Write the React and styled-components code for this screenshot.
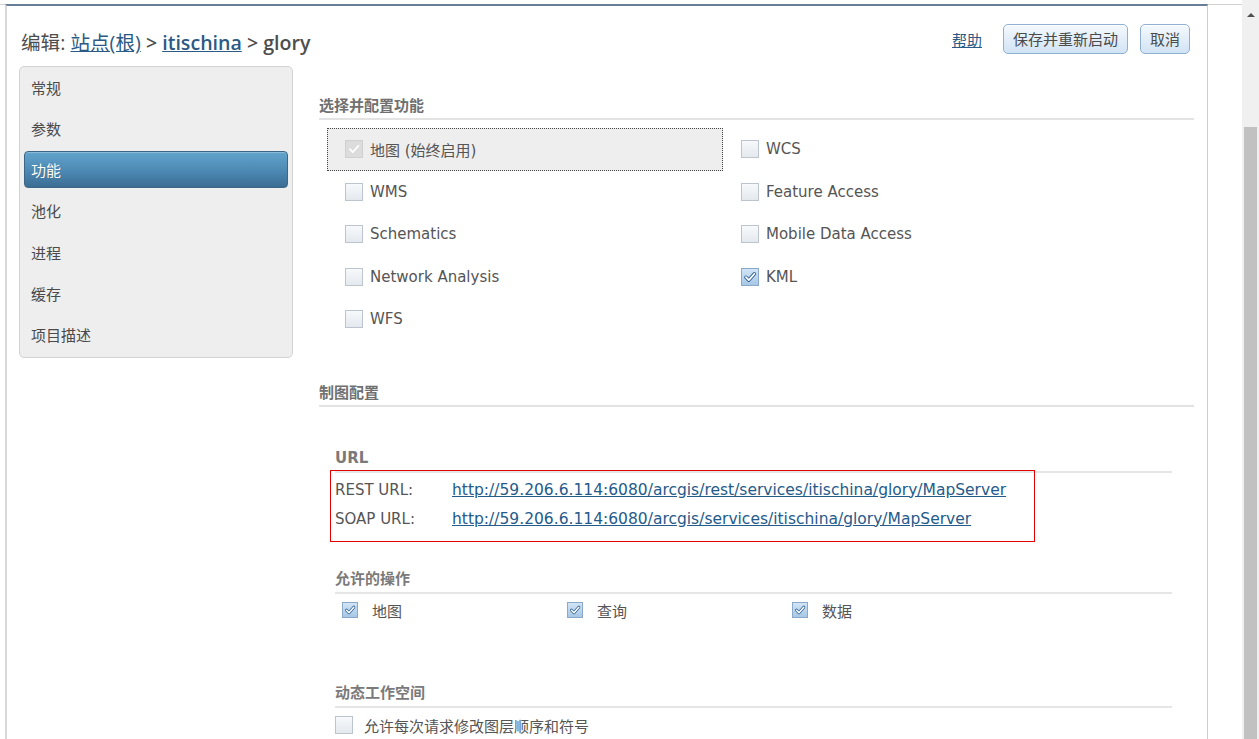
import React from "react";
import styled, { createGlobalStyle, css } from "styled-components";

const Global = createGlobalStyle`
  html, body { margin: 0; padding: 0; background: #fff; overflow: hidden; }
  body { font-family: "DejaVu Sans", "Noto Sans CJK SC", sans-serif; color: #555; }
  * { box-sizing: border-box; }
`;

const Root = styled.div`
  display: flex;
  height: 739px;
  width: 1259px;
`;

const Viewport = styled.div`
  flex: 1;
  display: flex;
  flex-direction: column;
  padding-top: 4px;
  min-width: 0;
`;

const Strip = styled.div`
  flex: 1;
  border-top: 1px solid #d2d2d2;
  display: flex;
  min-height: 0;
`;

const Frame = styled.div`
  width: 1203px;
  margin-left: 5px;
  margin-top: -1px;
  border-top: 2px solid #687d98;
  border-left: 2px solid #d8d8d8;
  border-right: 1px solid #cdcdcd;
  overflow: hidden;
  display: flex;
  flex-direction: column;
`;

const Header = styled.div`
  height: 60px;
  flex: none;
  display: flex;
  justify-content: space-between;
  align-items: flex-start;
  padding: 18px 17px 0 12px;
`;

const Title = styled.h1`
  margin: 7px 0 0 2px;
  font-family: "Open Sans", "Noto Sans CJK SC", sans-serif;
  font-size: 19.6px;
  line-height: 24px;
  font-weight: 400;
  color: #4d4d4d;
  white-space: nowrap;
`;

const Crumb = styled.a`
  color: ${(p) => (p.$link ? "#2b5a84" : "#4d4d4d")};
  text-decoration: ${(p) => (p.$link ? "underline" : "none")};
  font-weight: ${(p) => (p.$strong ? 600 : 400)};
`;

const Actions = styled.div`
  display: flex;
  align-items: center;
  height: 30px;
`;

const HelpLink = styled.a`
  font-family: "Noto Sans CJK SC", sans-serif;
  font-size: 15px;
  color: #2b5a84;
  text-decoration: underline;
  margin-right: 21px;
`;

const Button = styled.button`
  height: 30px;
  padding: 0 9px;
  margin-left: ${(p) => p.$ml || 0}px;
  border: 1px solid #8fb0d1;
  border-radius: 5px;
  background: linear-gradient(#f4f9fe, #d2e3f4);
  box-shadow: inset 0 1px 0 #fff;
  font-family: "Noto Sans CJK SC", sans-serif;
  font-size: 15px;
  color: #4a4a4a;
  line-height: 28px;
`;

const Body = styled.div`
  flex: 1;
  display: flex;
  align-items: flex-start;
  padding-left: 12px;
  min-height: 0;
`;

const Sidebar = styled.nav`
  width: 274px;
  flex: none;
  border: 1px solid #d3d3d3;
  border-radius: 5px;
  background: #eeeeee;
  padding: 1.5px 4px 3.5px;
  display: flex;
  flex-direction: column;
  gap: 4.33px;
`;

const NavItem = styled.div`
  height: 37px;
  display: flex;
  align-items: center;
  padding-left: 6px;
  font-family: "Noto Sans CJK SC", sans-serif;
  font-size: 15px;
  color: #4a4a4a;
  border: 1px solid transparent;
  border-radius: 4px;
  ${(p) =>
    p.$active &&
    css`
      color: #fff;
      border-color: #3d6687;
      background: linear-gradient(#62a4cc, #4c88b3 55%, #3b6d93);
      box-shadow: inset 0 1px 0 rgba(255, 255, 255, 0.25);
      text-shadow: 0 0 1px rgba(0, 0, 0, 0.3);
    `}
`;

const Main = styled.main`
  flex: 1;
  margin: 0 13px 0 26px;
  padding-top: 30px;
  min-width: 0;
`;

const SectionTitle = styled.div`
  font-family: "Noto Sans CJK SC", sans-serif;
  font-size: 15px;
  font-weight: 700;
  line-height: 18px;
  color: #707070;
  padding-bottom: 4px;
  border-bottom: 2px solid #e3e3e3;
  margin-top: ${(p) => p.$mt || 0}px;
`;

const FeatureGrid = styled.div`
  display: grid;
  grid-template-columns: 396px 1fr;
  grid-auto-rows: 42.5px;
  margin: 8px 0 0 8px;
`;

const FeatureCell = styled.label`
  display: flex;
  align-items: center;
  gap: 7px;
  padding-left: 17px;
  border: 1px solid transparent;
  font-size: 15px;
  color: #555;
  ${(p) =>
    p.$focus &&
    css`
      background: #eeeeee;
      border: 1px dotted #444;
    `}
`;

const Sub = styled.section`
  margin: ${(p) => p.$mt || 0}px 22px 0 16px;
`;

const SubTitle = styled.div`
  font-family: "DejaVu Sans", "Noto Sans CJK SC", sans-serif;
  font-size: 15px;
  font-weight: 700;
  line-height: 18px;
  color: #7a7a7a;
  padding-bottom: 4px;
  border-bottom: 2px solid #e6e6e6;
`;

const UrlBox = styled.div`
  width: 705px;
  margin: -3px 0 0 -5px;
  border: 1px solid #e30000;
  padding: 4px 0 8px 4px;
  position: relative;
`;

const UrlRow = styled.div`
  display: grid;
  grid-template-columns: 117px auto;
  align-items: center;
  height: 29px;
`;

const UrlLabel = styled.span`
  font-size: 15px;
  color: #555;
`;

const UrlLink = styled.a`
  font-size: 15.5px;
  color: #245b8a;
  text-decoration: underline;
  white-space: nowrap;
`;

const OpsRow = styled.div`
  display: grid;
  grid-template-columns: 225px 225px 225px;
  margin-top: 6px;
`;

const OpItem = styled.label`
  display: flex;
  align-items: center;
  height: 20px;
  gap: ${(p) => p.$gap || 14}px;
  padding-left: ${(p) => p.$pl ?? 7}px;
  font-family: "Noto Sans CJK SC", sans-serif;
  font-size: 15px;
  color: #555;
  margin-top: ${(p) => p.$mt || 0}px;
`;

const Box = styled.span`
  flex: none;
  width: ${(p) => p.$size}px;
  height: ${(p) => p.$size}px;
  border: 1px solid #bcc5cf;
  background: linear-gradient(#f7f9fb, #e4e9ef);
  display: inline-flex;
  align-items: center;
  justify-content: center;
  ${(p) =>
    p.$checked &&
    css`
      border-color: #8aa8c8;
      background: linear-gradient(#d2e5f7, #a7c7e6);
    `}
  ${(p) =>
    p.$disabled &&
    css`
      border-color: #d0d0d0;
      background: #dcdcdc;
    `}
`;

const Scrollbar = styled.div`
  width: 17px;
  flex: none;
  background: #f0f0f0;
  display: flex;
  flex-direction: column;
  align-items: center;
`;

const Arrow = styled.div`
  margin-top: 13px;
  width: 0;
  height: 0;
  border-left: 4px solid transparent;
  border-right: 4px solid transparent;
  border-bottom: 4px solid #505050;
`;

const Thumb = styled.div`
  margin-top: 110px;
  flex: 1;
  width: 13px;
  background: #c1c1c1;
`;

function Check({ size = 18, checked, disabled }) {
  return (
    <Box $size={size} $checked={checked} $disabled={disabled}>
      {(checked || disabled) && (
        <svg width={size - 4} height={size - 4} viewBox="0 0 12 12">
          {!disabled && (
            <path d="M2.5 6.2 L5 8.7 L9.8 3.2" fill="none" stroke="#2f6193" strokeWidth="3" strokeLinecap="round" strokeLinejoin="round" />
          )}
          <path d="M2.5 6.2 L5 8.7 L9.8 3.2" fill="none" stroke="#fff" strokeWidth="1.5" strokeLinecap="round" strokeLinejoin="round" />
        </svg>
      )}
    </Box>
  );
}

const nav = ["常规", "参数", "功能", "池化", "进程", "缓存", "项目描述"];

const features = [
  ["地图 (始终启用)", true, true],
  ["WCS", false],
  ["WMS", false],
  ["Feature Access", false],
  ["Schematics", false],
  ["Mobile Data Access", false],
  ["Network Analysis", false],
  ["KML", true],
  ["WFS", false],
];

export default function App() {
  return (
    <>
      <Global />
      <Root>
        <Viewport>
          <Strip>
            <Frame>
              <Header>
                <Title>
                  编辑: <Crumb $link href="#">站点(根)</Crumb> <Crumb $strong>&gt;</Crumb>{" "}
                  <Crumb $link $strong href="#">itischina</Crumb> <Crumb $strong>&gt; glory</Crumb>
                </Title>
                <Actions>
                  <HelpLink href="#">帮助</HelpLink>
                  <Button>保存并重新启动</Button>
                  <Button $ml={12}>取消</Button>
                </Actions>
              </Header>
              <Body>
                <Sidebar>
                  {nav.map((n) => (
                    <NavItem key={n} $active={n === "功能"}>
                      {n}
                    </NavItem>
                  ))}
                </Sidebar>
                <Main>
                  <SectionTitle>选择并配置功能</SectionTitle>
                  <FeatureGrid>
                    {features.map(([label, checked, always], i) => (
                      <FeatureCell key={label} $focus={i === 0}>
                        <Check checked={checked && !always} disabled={always} />
                        <span>{label}</span>
                      </FeatureCell>
                    ))}
                  </FeatureGrid>
                  <SectionTitle $mt={42.5}>制图配置</SectionTitle>
                  <Sub $mt={42}>
                    <SubTitle>URL</SubTitle>
                    <UrlBox>
                      <UrlRow>
                        <UrlLabel>REST URL:</UrlLabel>
                        <UrlLink href="#">http://59.206.6.114:6080/arcgis/rest/services/itischina/glory/MapServer</UrlLink>
                      </UrlRow>
                      <UrlRow>
                        <UrlLabel>SOAP URL:</UrlLabel>
                        <UrlLink href="#">http://59.206.6.114:6080/arcgis/services/itischina/glory/MapServer</UrlLink>
                      </UrlRow>
                    </UrlBox>
                  </Sub>
                  <Sub $mt={28}>
                    <SubTitle>允许的操作</SubTitle>
                    <OpsRow>
                      {["地图", "查询", "数据"].map((t) => (
                        <OpItem key={t}>
                          <Check size={16} checked />
                          <span>{t}</span>
                        </OpItem>
                      ))}
                    </OpsRow>
                  </Sub>
                  <Sub $mt={64}>
                    <SubTitle>动态工作空间</SubTitle>
                    <OpItem $pl={0} $gap={11} $mt={7}>
                      <Check size={18} />
                      <span>允许每次请求修改图层顺序和符号</span>
                    </OpItem>
                  </Sub>
                </Main>
              </Body>
            </Frame>
          </Strip>
        </Viewport>
        <Scrollbar>
          <Arrow />
          <Thumb />
        </Scrollbar>
      </Root>
    </>
  );
}
